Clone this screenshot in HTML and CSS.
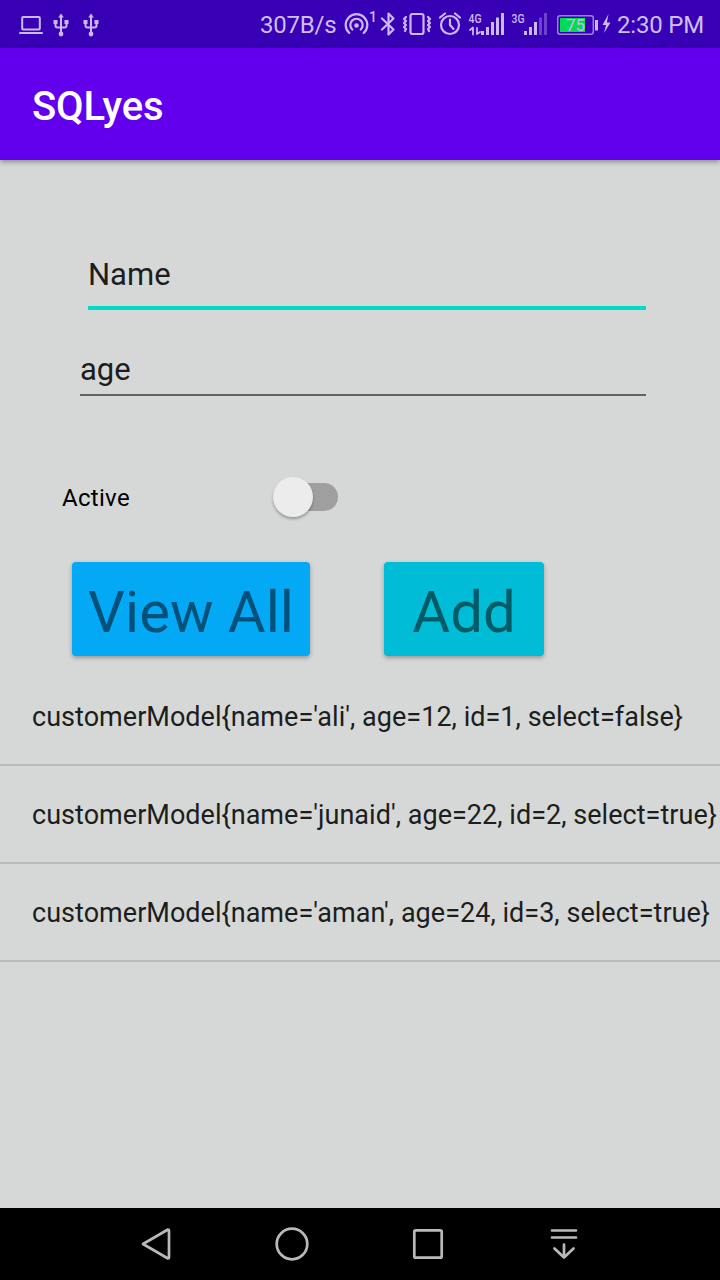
FILE: index.html
```html
<!DOCTYPE html>
<html lang="en">
<head>
<meta charset="utf-8">
<meta name="viewport" content="width=device-width">
<title>SQLyes</title>
<link rel="stylesheet" href="styles.css">
</head>
<body>
<div class="screen">
  <div class="status">
    <svg class="icon" width="30" height="48" viewBox="16 0 30 48"><rect x="22.200" y="17" width="17.600" height="12.600" rx="1"/><path d="M20 33h22"/></svg>
    <svg class="icon" width="30" height="48" viewBox="46 0 30 48"><path d="M61 17v17M55.500 22v3.500q0 2 2 2h7q2 0 2-2V22"/><path class="solid" d="M61 13.500l2.800 4h-5.600zM53.500 20h4v4h-4zM64.500 20h4v4h-4z"/><circle class="solid" cx="61" cy="34" r="2.400"/></svg>
    <svg class="icon" width="30" height="48" viewBox="46 0 30 48"><path d="M61 17v17M55.500 22v3.500q0 2 2 2h7q2 0 2-2V22"/><path class="solid" d="M61 13.500l2.800 4h-5.600zM53.500 20h4v4h-4zM64.500 20h4v4h-4z"/><circle class="solid" cx="61" cy="34" r="2.400"/></svg>
    <span class="speed">307B/s</span>
    <svg class="icon" width="38" height="48" viewBox="341 0 38 48"><path class="bold" d="M349.300 33a10.800 10.800 0 1 1 14.400 0M352.300 29.500a6.200 6.200 0 1 1 8.400 0"/><circle class="solid" cx="356.500" cy="25.500" r="2.300"/><text x="369" y="22" class="hotspot">1</text></svg>
    <svg class="icon" width="20" height="48" viewBox="379 0 20 48"><path class="bold" d="M382 18.500l11.500 11-5 5V13.500l5 5-11.500 11"/></svg>
    <svg class="icon" width="36" height="48" viewBox="399 0 36 48"><rect class="bold" x="410.500" y="14" width="13" height="20" rx="2"/><path class="bold" d="M406 17l-2 2 2 2-2 2 2 2-2 2 2 2-1 2M428 17l2 2-2 2 2 2-2 2 2 2-2 2 1 2"/></svg>
    <svg class="icon" width="30" height="48" viewBox="435 0 30 48"><circle class="bold" cx="450" cy="25" r="9"/><path class="bold" d="M450 19.500V25l3.500 4M440 17.500l5-4M460 17.500l-5-4"/></svg>
    <svg class="icon" width="43" height="48" viewBox="465 0 43 48"><text x="468.500" y="22.500" class="net" textLength="13" lengthAdjust="spacingAndGlyphs">4G</text><path class="thin" d="M470 30l3-2.500V34.500M477 28v6l3-2"/><path class="solid" d="M481 31h3v4h-3zM486 27h3v8h-3zM491 22h3v13h-3zM496 17.500h3V35h-3zM501 13h3v22h-3z"/></svg>
    <svg class="icon" width="43" height="48" viewBox="508 0 43 48"><text x="511.500" y="22.500" class="net" textLength="13" lengthAdjust="spacingAndGlyphs">3G</text><path class="solid" d="M524 31h3v4h-3zM529 27h3v8h-3zM534 22h3v13h-3z"/><path class="solid faint" d="M539 17.500h3V35h-3zM544 13h3v22h-3z"/></svg>
    <svg class="icon" width="49" height="48" viewBox="551 0 49 48"><rect class="case" x="557.700" y="15.700" width="35.600" height="18.600" rx="2.500"/><path class="charge" d="M560 18h25v14h-25z"/><path class="solid" d="M595 20h3v10.500h-3z"/><text x="566" y="31.300" class="level">75</text></svg>
    <svg class="icon" width="17" height="48" viewBox="600 0 17 48"><path class="solid" d="M608.500 14l-6 11h3.500l-2 8 6.500-10.500h-3.600z"/></svg>
    <span class="clock">2:30 PM</span>
  </div>
  <header class="bar"><h1 class="title">SQLyes</h1></header>
  <main class="content">
    <div class="field name">Name</div>
    <div class="field age">age</div>
    <div class="active">
      <span class="label">Active</span>
      <span class="switch"><span class="thumb"></span></span>
    </div>
    <div class="actions">
      <button class="button view">View All</button>
      <button class="button add">Add</button>
    </div>
    <ul class="list">
      <li class="row">customerModel{name='ali', age=12, id=1, select=false}</li>
      <li class="row">customerModel{name='junaid', age=22, id=2, select=true}</li>
      <li class="row">customerModel{name='aman', age=24, id=3, select=true}</li>
    </ul>
  </main>
  <nav class="nav">
    <svg width="136" height="72" viewBox="88 1208 136 72"><path d="M143 1244l25-14.500q1 0 1 1v27q0 1-1 1z"/></svg>
    <svg width="136" height="72" viewBox="224 1208 136 72"><circle cx="292" cy="1244" r="15.300"/></svg>
    <svg width="136" height="72" viewBox="360 1208 136 72"><rect x="414.300" y="1230.300" width="27.400" height="27.400" rx="1.500"/></svg>
    <svg width="136" height="72" viewBox="496 1208 136 72"><path d="M552 1230.500h24M552 1237.500h24M564 1244.500v13M554.500 1248.500l9.500 9 9.500-9"/></svg>
  </nav>
</div>
</body>
</html>
```
FILE: styles.css
```css
* { box-sizing: border-box; }
body { margin: 0; font-family: Roboto, sans-serif; }
.screen {
  display: flex;
  flex-direction: column;
  width: 720px;
  height: 1280px;
  overflow: hidden;
  background: #d6d8d7;
  color: #1c1d1d;
}
.status {
  display: flex;
  flex: none;
  height: 48px;
  padding-left: 16px;
  background: #3800b4;
  color: #cdbff0;
  font-size: 24px;
  line-height: 51px;
  white-space: nowrap;
}
.icon { flex: none; fill: none; stroke: #cdb8f2; stroke-width: 2; stroke-linecap: round; stroke-linejoin: round; }
.icon text { fill: #cdb8f2; stroke: none; }
.icon .bold { stroke-width: 2.200; }
.icon .thin { stroke-width: 1.800; }
.icon .solid { fill: #cdb8f2; stroke: none; }
.icon .faint { fill: #6c43ca; }
.icon .case { stroke: #9e7fe0; stroke-width: 1.500; }
.icon .charge { fill: #00db56; stroke: none; }
.hotspot { font-size: 14px; font-weight: 500; }
.net { font-size: 12.500px; font-weight: 500; }
.level { font-size: 17px; }
.speed { flex: none; width: 81px; margin-left: 154px; letter-spacing: -.2px; }
.clock { flex: none; letter-spacing: -.2px; }
.bar {
  z-index: 1;
  display: flex;
  flex: none;
  align-items: center;
  height: 112px;
  padding: 6px 32px 0;
  background: #6200ee;
  box-shadow: 0 2px 5px rgba(0, 0, 0, .35);
}
.title { margin: 0; color: #fff; font-size: 40px; font-weight: 500; letter-spacing: -.1px; line-height: 48px; }
.content { flex: 1; padding-top: 82px; }
.field { width: 558px; margin-left: 88px; font-size: 31px; }
.name { height: 68px; border-bottom: 4px solid #03dac5; line-height: 66px; }
.age { width: 566px; height: 86px; margin-left: 80px; padding-top: 40px; border-bottom: 2px solid #626363; line-height: 40px; }
.active { display: flex; align-items: center; height: 40px; margin: 81px 0 0 62px; color: #000; font-size: 24px; letter-spacing: .3px; }
.label { width: 218px; padding-top: 1px; }
.switch { display: flex; align-items: center; width: 58px; height: 28px; border-radius: 14px; background: #9f9f9f; }
.thumb { flex: none; width: 40px; height: 40px; margin-left: -7px; border-radius: 50%; background: #ececec; box-shadow: 0 2px 3px rgba(0, 0, 0, .3); }
.actions { display: flex; gap: 74px; margin: 45px 0 0 72px; }
.button {
  height: 94px;
  padding: 6px 0 0;
  border: 0;
  border-radius: 4px;
  box-shadow: 0 2px 4px rgba(0, 0, 0, .3);
  font: 58px/88px Roboto, sans-serif;
  white-space: nowrap;
}
.view { width: 238px; background: #03a9f4; color: #02517a; }
.add { width: 160px; background: #00bcd6; color: #005b67; }
.list { margin: 12px 0 0; padding: 0; list-style: none; }
.row { height: 98px; padding-left: 32px; border-bottom: 2px solid #b9bbba; font-size: 27px; letter-spacing: .03px; line-height: 98px; white-space: nowrap; }
.nav { display: flex; flex: none; height: 72px; padding-left: 88px; background: #000; }
.nav svg { fill: none; stroke: #b9b9b9; stroke-width: 2.700; stroke-linecap: round; stroke-linejoin: round; }
```
